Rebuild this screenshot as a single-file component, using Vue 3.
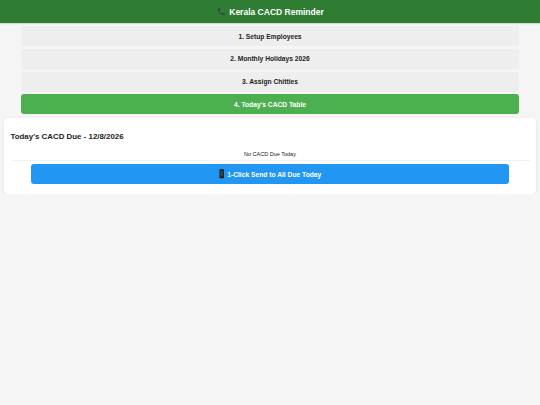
<script setup>
const tabs = [
  { label: '1. Setup Employees' },
  { label: '2. Monthly Holidays 2026' },
  { label: '3. Assign Chitties' },
  { label: "4. Today's CACD Table", active: true },
]
</script>

<template>
<div class="page">
  <header class="top">
    <svg class="phone" viewBox="0 0 24 24" width="10" height="10">
      <path d="M6.6 2.5l3 .8 1.2 4.600-2.200 2c1 2.300 3 4.400 5.500 5.500l2-2.200 4.600 1.200.8 3c.2.900-.3 1.800-1.200 2.100C12.800 21.600 2.400 11.200 4.500 3.700c.3-.9 1.200-1.400 2.100-1.200z" fill="#3c4a40"/>
    </svg>
    <span>Kerala CACD Reminder</span>
  </header>

  <nav class="tabs">
    <button v-for="t in tabs" :key="t.label" :class="'tab ' + (t.active ? 'active' : '')">{{ t.label }}</button>
  </nav>

  <section class="card">
    <h2>Today's CACD Due - 12/8/2026</h2>
    <div class="empty">No CACD Due Today</div>
    <div class="send-wrap">
      <button class="send">
        <svg class="mobile" viewBox="0 0 12 20" width="5.500" height="9.500">
          <rect x="1" y="0" width="10" height="20" rx="2" fill="#1a1a1a"/>
          <rect x="2.500" y="3" width="7" height="13" fill="#3a4048"/>
        </svg>
        <span>1-Click Send to All Due Today</span>
      </button>
    </div>
  </section>
</div>
</template>

<style scoped>
.page { font-family: "Liberation Sans", Arial, sans-serif; }
.top {
  height: 23px;
  background: #2e7d32;
  color: #fff;
  font-size: 8.500px;
  font-weight: bold;
  display: flex; align-items: center; justify-content: center; gap: 3px;
  box-shadow: 0 1px 1px rgba(0,0,0,.12);
}
.tabs {
  display: flex; flex-direction: column; gap: 3px;
  margin: 3px 21px 0;
}
.tab {
  height: 20px;
  margin-bottom: -0.250px;
  border: none;
  border-radius: 3px;
  background: #eee;
  color: #222;
  font-family: inherit;
  font-size: 6.700px;
  font-weight: bold;
  padding: 0;
}
.tab.active { background: #4caf50; color: #fff; }
.card {
  margin: 4px 4px 0;
  height: 76px;
  box-sizing: border-box;
  padding: 0 6.500px;
  background: #fff;
  border-radius: 4px;
  box-shadow: 0 1px 3px rgba(0,0,0,.1);
  display: flex; flex-direction: column;
}
h2 {
  margin: 13px 0 0;
  font-size: 7.900px;
  line-height: 11px;
  font-weight: bold;
  color: #222;
}
.empty {
  margin-top: 8px;
  padding-bottom: 2px;
  font-size: 5.500px;
  line-height: 8px;
  text-align: center;
  color: #222;
  border-bottom: 1px solid #f0f0f0;
}
.send-wrap { display: flex; justify-content: center; margin-top: 3px; }
.send {
  width: 478px;
  height: 20px;
  border: none;
  border-radius: 3px;
  background: #2196f3;
  color: #fff;
  font-family: inherit;
  font-size: 6.700px;
  font-weight: bold;
  padding: 0;
  display: flex; align-items: center; justify-content: center; gap: 3px;
}
</style>

<style>
html, body { background: #f5f5f5; }
</style>
